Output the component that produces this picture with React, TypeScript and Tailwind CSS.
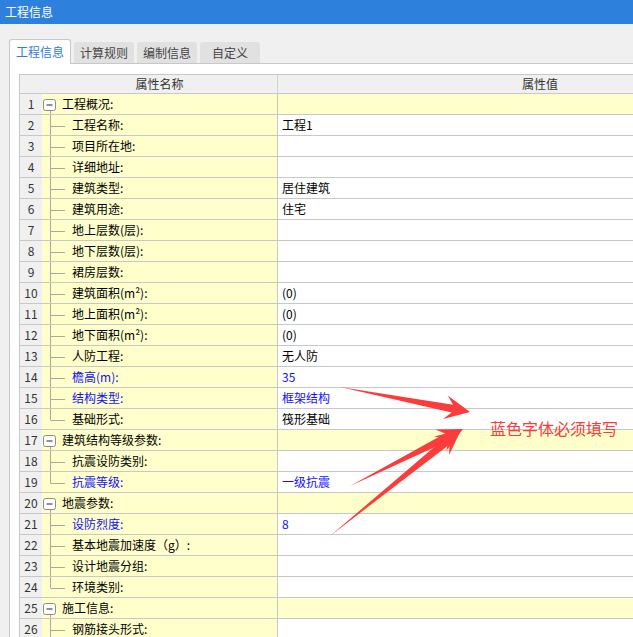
import React from "react";

type Row = {
  n: number;
  label: string;
  value?: string;
  group?: boolean;
  blue?: boolean;
  last?: boolean;
};

const rows: Row[] = [
  { n: 1, label: "工程概况:", group: true },
  { n: 2, label: "工程名称:", value: "工程1" },
  { n: 3, label: "项目所在地:" },
  { n: 4, label: "详细地址:" },
  { n: 5, label: "建筑类型:", value: "居住建筑" },
  { n: 6, label: "建筑用途:", value: "住宅" },
  { n: 7, label: "地上层数(层):" },
  { n: 8, label: "地下层数(层):" },
  { n: 9, label: "裙房层数:" },
  { n: 10, label: "建筑面积(m²):", value: "(0)" },
  { n: 11, label: "地上面积(m²):", value: "(0)" },
  { n: 12, label: "地下面积(m²):", value: "(0)" },
  { n: 13, label: "人防工程:", value: "无人防" },
  { n: 14, label: "檐高(m):", value: "35", blue: true },
  { n: 15, label: "结构类型:", value: "框架结构", blue: true },
  { n: 16, label: "基础形式:", value: "筏形基础", last: true },
  { n: 17, label: "建筑结构等级参数:", group: true },
  { n: 18, label: "抗震设防类别:" },
  { n: 19, label: "抗震等级:", value: "一级抗震", blue: true, last: true },
  { n: 20, label: "地震参数:", group: true },
  { n: 21, label: "设防烈度:", value: "8", blue: true },
  { n: 22, label: "基本地震加速度（g）:" },
  { n: 23, label: "设计地震分组:" },
  { n: 24, label: "环境类别:", last: true },
  { n: 25, label: "施工信息:", group: true },
  { n: 26, label: "钢筋接头形式:" },
];

const tabs = ["计算规则", "编制信息", "自定义"];

// tapered screenshot-tool arrow, tail -> tip
function arrowPoints(tx: number, ty: number, px: number, py: number) {
  const dx = px - tx;
  const dy = py - ty;
  const len = Math.hypot(dx, dy);
  const ux = dx / len;
  const uy = dy / len;
  const nx = -uy;
  const ny = ux;
  const L = 25;
  const W = 12;
  const N = 18;
  const w = 4;
  const bx = px - ux * L;
  const by = py - uy * L;
  const kx = px - ux * N;
  const ky = py - uy * N;
  const pts = [
    [tx, ty],
    [kx + nx * w, ky + ny * w],
    [bx + nx * W, by + ny * W],
    [px, py],
    [bx - nx * W, by - ny * W],
    [kx - nx * w, ky - ny * w],
  ];
  return pts.map((p) => p.map((v) => v.toFixed(1)).join(",")).join(" ");
}

function TreeCell({ row }: { row: Row }) {
  if (row.group) {
    return (
      <svg width="20" height="20" className="shrink-0">
        <rect x="1.5" y="5.5" width="12" height="11" rx="2" fill="#fff" stroke="#8a8a8a" />
        <line x1="4.5" y1="11" x2="10.5" y2="11" stroke="#222" strokeWidth="1" />
        <line x1="8.5" y1="17" x2="8.5" y2="20" stroke="#a8a8a8" />
      </svg>
    );
  }
  return (
    <svg width="30" height="20" className="shrink-0">
      <line x1="8.5" y1="0" x2="8.5" y2={row.last ? 11.5 : 20} stroke="#a8a8a8" />
      <line x1="9" y1="11.5" x2="23" y2="11.5" stroke="#a8a8a8" />
    </svg>
  );
}

export default function App() {
  return (
    <div className="relative w-[633px] h-[637px] overflow-hidden bg-[#f0f0f0] font-['Microsoft_YaHei','Noto_Sans_CJK_SC',sans-serif] text-[12px] text-black">
      <div className="h-6 bg-[#2d80dc] text-white flex items-center pl-[5px] leading-none">
        工程信息
      </div>

      <div className="pt-[15px] pl-[9px]">
        <div className="flex items-end gap-[3px]">
          <div className="relative z-10 -mb-px h-[25px] w-[62px] rounded-t-[3px] border border-b-0 border-[#c8c8c8] bg-white text-[#2d80dc] flex items-center justify-center">
            工程信息
          </div>
          {tabs.map((t) => (
            <div
              key={t}
              className="h-[21px] w-[60px] rounded-t-[3px] bg-[#e1e1e1] text-[#444] flex items-center justify-center"
            >
              {t}
            </div>
          ))}
        </div>

        <div className="border-t border-l border-[#c8c8c8] bg-white pt-[10px] pl-[9px]">
          <div className="border-t border-l border-[#c8c8c8] w-max">
            <div className="flex h-[19px] border-b border-[#c8c8c8] bg-[#f0f0f0] text-[#333]">
              <div className="w-[22px] shrink-0" />
              <div className="w-[236px] shrink-0 border-r border-[#d4d4d4] flex items-center justify-center">
                属性名称
              </div>
              <div className="w-[524px] shrink-0 flex items-center justify-center">属性值</div>
            </div>
            {rows.map((r) => (
              <div key={r.n} className="flex h-[21px] border-b border-[#c8c8c8]">
                <div className="w-[22px] shrink-0 bg-[#f0f0f0] text-[#333] flex items-center justify-center">
                  {r.n}
                </div>
                <div className="w-[236px] shrink-0 bg-[#ffffcc] border-r border-[#c8c8c8] flex items-center">
                  <TreeCell row={r} />
                  <span className={r.blue ? "text-[#1010ff]" : "text-black"}>{r.label}</span>
                </div>
                <div
                  className={
                    r.group
                      ? "w-[524px] shrink-0 bg-[#ffffcc] flex items-center pl-1"
                      : "w-[524px] shrink-0 bg-white flex items-center pl-1"
                  }
                >
                  <span className={r.blue ? "text-[#1010ff]" : "text-black"}>{r.value}</span>
                </div>
              </div>
            ))}
          </div>
        </div>
      </div>

      <svg className="pointer-events-none absolute left-0 top-0" width="633" height="637">
        <polygon points={arrowPoints(340, 387, 470, 412)} fill="#fb3c3c" />
        <polygon points={arrowPoints(350, 486, 463, 429)} fill="#fb3c3c" />
        <polygon points={arrowPoints(330, 536, 461, 430)} fill="#fb3c3c" />
      </svg>
      <div className="pointer-events-none absolute left-[490px] top-[419px] text-[16px] leading-[18px] text-[#fb3c3c]">
        蓝色字体必须填写
      </div>
    </div>
  );
}
